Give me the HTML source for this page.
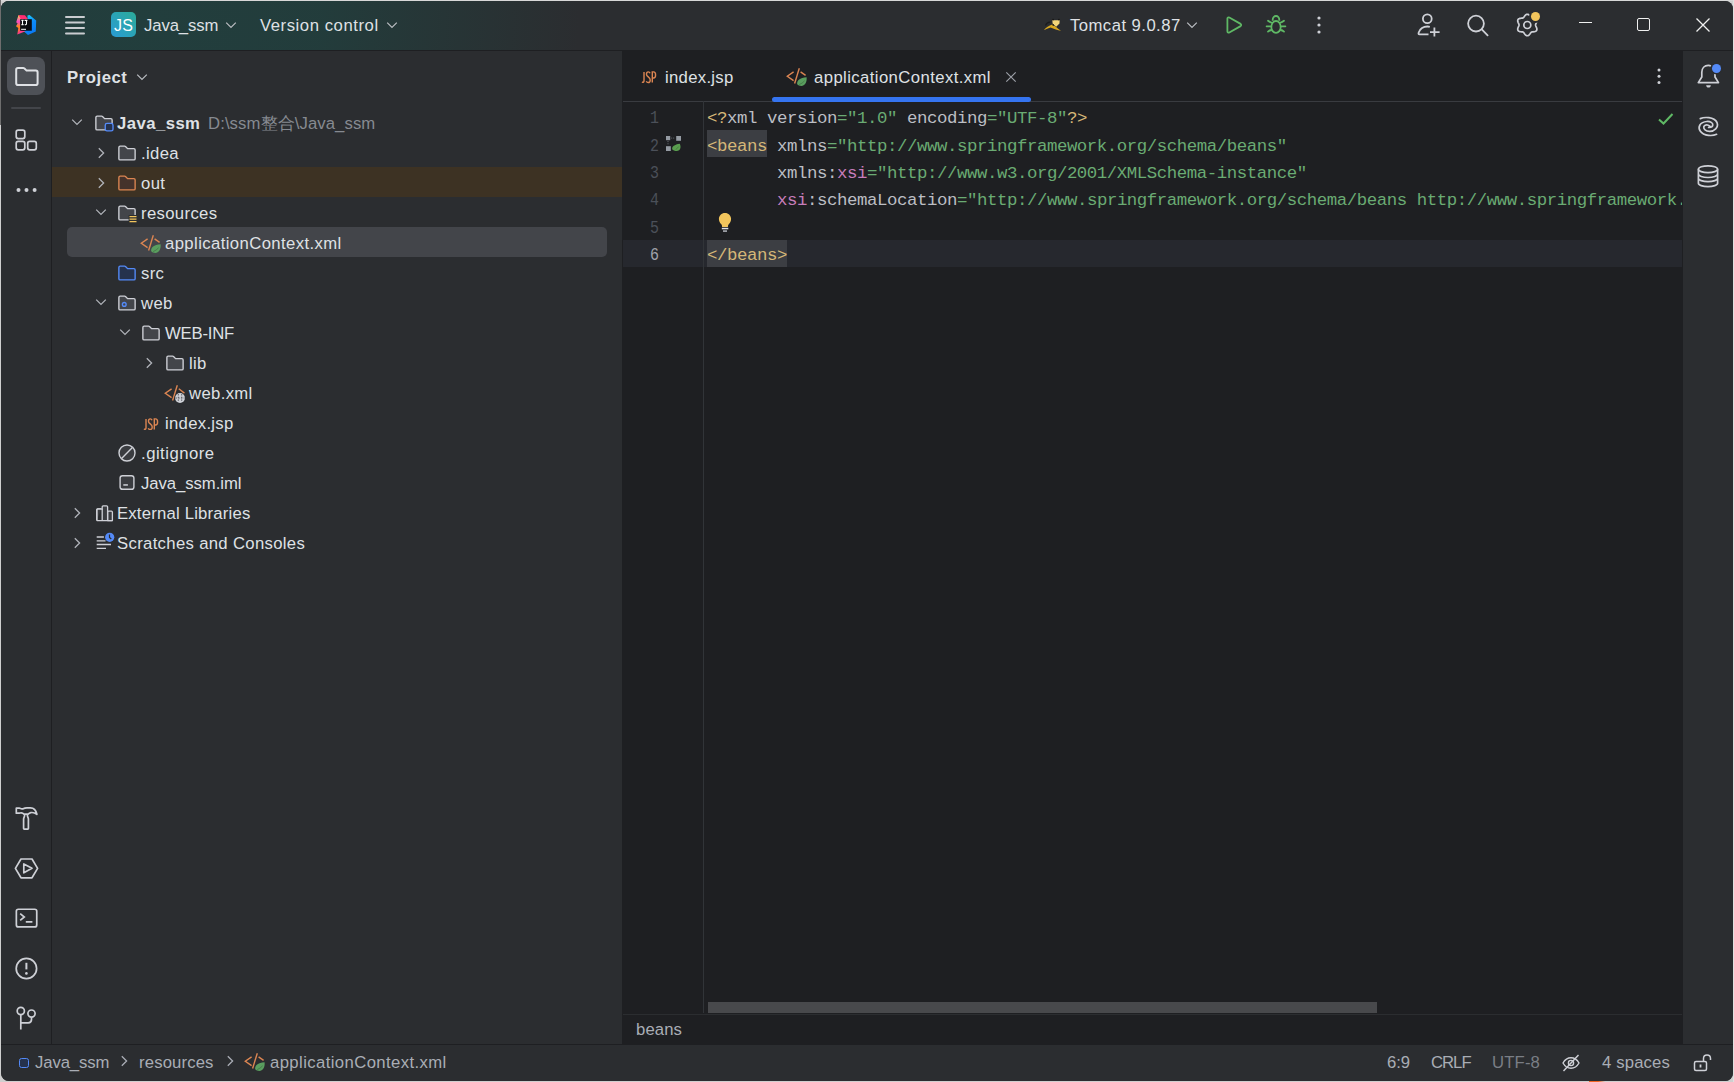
<!DOCTYPE html>
<html><head><meta charset="utf-8">
<style>
*{margin:0;padding:0;box-sizing:border-box}
html,body{width:1734px;height:1082px;overflow:hidden;background:#cfcfcf;font-family:"Liberation Sans",sans-serif;}
#win{position:absolute;left:1px;top:1px;width:1732px;height:1080px;border-radius:8px;overflow:hidden;background:#2B2D30}
.a{position:absolute;display:block}
.t{position:absolute;white-space:pre;line-height:20px}
.code{position:absolute;left:0;font-family:"Liberation Mono",monospace;font-size:17.4px;letter-spacing:-0.44px;white-space:pre;color:#BCBEC4;line-height:20px}
.tg{color:#D5B778}.av{color:#6AAB73}.ns{color:#C77DBB}
.ln{position:absolute;font-family:"Liberation Mono",monospace;font-size:17.8px;letter-spacing:-0.44px;color:#4B5059;line-height:20px;white-space:pre;transform:scaleX(0.84);transform-origin:0 0}
</style></head><body>
<div class="a" style="left:0;top:0;width:1734px;height:1px;background:#d8d8d8"></div>
<div class="a" style="left:0;top:0;width:1px;height:125px;background:#6e6e6e"></div>
<div class="a" style="left:1733px;top:0;width:1px;height:1082px;background:#e0e0e0"></div>
<div class="a" style="left:1589px;top:1076px;width:18px;height:6px;background:#F26522;border-radius:3px 6px 0 0;transform:skewY(-8deg)"></div>
<div id="win"><div class="a" style="left:-1px;top:-1px;width:1734px;height:1082px">

<div class="a" style="left:0;top:0;width:1734px;height:50px;background:#2B2D30"></div>
<div class="a" style="left:0;top:0;width:760px;height:50px;background:radial-gradient(ellipse 430px 300px at 150px 20px,rgba(34,62,61,1) 0%,rgba(34,61,60,0.95) 40%,rgba(43,45,48,0) 100%)"></div>
<div class="a" style="left:0;top:50px;width:1734px;height:1px;background:#1E1F22"></div>
<svg class="a" style="left:12px;top:11px;" width="28" height="28" viewBox="0 0 28 28" fill="none"><defs><linearGradient id="gb" x1="0" y1="0" x2="0.3" y2="1"><stop offset="0" stop-color="#22DCFF"/><stop offset="0.5" stop-color="#0D8BF8"/><stop offset="1" stop-color="#0A7CF5"/></linearGradient><linearGradient id="gl" x1="0" y1="0" x2="0" y2="1"><stop offset="0" stop-color="#FFD04A"/><stop offset="0.35" stop-color="#F548C8"/><stop offset="0.6" stop-color="#FF8A1C"/><stop offset="1" stop-color="#FF3D78"/></linearGradient></defs><path d="M15.5 4.5L17.5 4L24.2 9.5L23.8 20.5L16 24L12 20.5L15.5 8Z" fill="url(#gb)"/><path d="M6.5 4L13 4.2L16 8.2L8 8.8Z" fill="#FF2D72"/><path d="M6.5 4L8.8 8L8.4 20L5.3 23.5L6.3 17L4 15.3L5.6 12.5L4.2 11.2Z" fill="url(#gl)"/><path d="M5.3 23.5L8.4 19L13.5 20.2Z" fill="#FF3D8C"/><rect x="8.2" y="8.2" width="11.6" height="11.5" fill="#0A0A0F"/><path d="M9.4 9.4H11.6M10.5 9.4V13.6M9.4 13.6H11.6M12.6 9.4H15.4M14.5 9.4V12.6C14.5 13.6 13.8 14 12.8 13.6" stroke="#FFFFFF" stroke-width="1.1"/><rect x="9.1" y="17.8" width="4.9" height="1" fill="#FFFFFF"/></svg>
<svg class="a" style="left:64px;top:15px;" width="22" height="20" viewBox="0 0 22 20" fill="none"><rect x="1" y="1" width="20" height="2" rx="1" fill="#C9CCD0"/><rect x="1" y="6.5" width="20" height="2" rx="1" fill="#C9CCD0"/><rect x="1" y="12" width="20" height="2" rx="1" fill="#C9CCD0"/><rect x="1" y="17.5" width="20" height="2" rx="1" fill="#C9CCD0"/></svg>
<div class="a" style="left:111px;top:12px;width:25px;height:25px;border-radius:5px;background:linear-gradient(45deg,#2A9BD6 0%,#2BAB98 100%)"></div>
<div class="t" style="left:114px;top:16px;color:#FFFFFF;font-size:16px;letter-spacing:0.2px;font-weight:normal;">JS</div>
<div class="t" style="left:144px;top:16px;color:#DFE1E5;font-size:16.7px;letter-spacing:-0.1px;font-weight:normal;">Java_ssm</div>
<svg class="a" style="left:225px;top:19px;" width="12" height="12" viewBox="0 0 12 12" fill="none"><path d="M1.2 3.6L6 8.4L10.8 3.6" stroke="#B7BABF" stroke-width="1.3" fill="none"/></svg>
<div class="t" style="left:260px;top:16px;color:#DFE1E5;font-size:16.7px;letter-spacing:0.55px;font-weight:normal;">Version control</div>
<svg class="a" style="left:386px;top:19px;" width="12" height="12" viewBox="0 0 12 12" fill="none"><path d="M1.2 3.6L6 8.4L10.8 3.6" stroke="#B7BABF" stroke-width="1.3" fill="none"/></svg>
<svg class="a" style="left:1038px;top:12px;" width="28" height="26" viewBox="0 0 28 26" fill="none"><path d="M7.5 13.5C8.5 11.2 10.5 10 12.5 10.2" stroke="#1A1B1D" stroke-width="1.2"/><path d="M5.8 18.2C8 15.3 11 13.3 14.2 12.4C16.5 13.6 19.5 16 23 18.8C19.5 18.2 16 17 12.5 15.6C10.2 16.2 8 17.2 5.8 18.2Z" fill="#D9A820"/><path d="M14.3 7.6L15.4 8.3H20.6L21.7 7.6L21.5 11.5L18.2 14.8L14.6 11.5Z" fill="#F3D679"/><circle cx="15" cy="7.6" r="0.9" fill="#141414"/><circle cx="21" cy="7.6" r="0.9" fill="#141414"/><circle cx="15.2" cy="13.1" r="0.8" fill="#141414"/></svg>
<div class="t" style="left:1070px;top:16px;color:#DFE1E5;font-size:16.7px;letter-spacing:0.45px;font-weight:normal;">Tomcat 9.0.87</div>
<svg class="a" style="left:1186px;top:19px;" width="12" height="12" viewBox="0 0 12 12" fill="none"><path d="M1.2 3.6L6 8.4L10.8 3.6" stroke="#B7BABF" stroke-width="1.3" fill="none"/></svg>
<svg class="a" style="left:1218px;top:10px;" width="32" height="30" viewBox="0 0 32 30" fill="none"><path d="M9.4 8.6C9.4 7.6 10.4 7 11.3 7.5L22.6 13.9C23.4 14.4 23.4 15.6 22.6 16.1L11.3 22.5C10.4 23 9.4 22.4 9.4 21.4Z" stroke="#5FB865" stroke-width="1.8" stroke-linejoin="round" fill="none"/></svg>
<svg class="a" style="left:1260px;top:10px;" width="32" height="30" viewBox="0 0 32 30" fill="none"><path d="M12.7 10.8V9.8C12.7 7.6 14.2 6 16 6C17.8 6 19.3 7.6 19.3 9.8V10.8" stroke="#5FB865" stroke-width="1.8"/><ellipse cx="16" cy="16.9" rx="4.7" ry="5.9" stroke="#5FB865" stroke-width="1.8"/><path d="M8 10.8C9.2 11.8 10.2 12.4 11.4 12.6M6.6 16.3H11.3M8 21.6C9.2 20.6 10.2 20.2 11.4 20M24 10.8C22.8 11.8 21.8 12.4 20.6 12.6M25.4 16.3H20.7M24 21.6C22.8 20.6 21.8 20.2 20.6 20" stroke="#5FB865" stroke-width="1.8" stroke-linecap="round"/></svg>
<svg class="a" style="left:1315px;top:14px;" width="8" height="22" viewBox="0 0 8 22" fill="none"><circle cx="4" cy="4" r="1.6" fill="#CED0D6"/><circle cx="4" cy="11" r="1.6" fill="#CED0D6"/><circle cx="4" cy="18" r="1.6" fill="#CED0D6"/></svg>
<svg class="a" style="left:1416px;top:10px;" width="26" height="28" viewBox="0 0 26 28" fill="none"><circle cx="11.3" cy="8.8" r="4.4" stroke="#CED0D6" stroke-width="1.8"/><path d="M12.5 24.3H3.5C2.5 24.3 2.3 23.6 2.7 22.5C4 19 7.2 16.5 11.5 16.5C12.3 16.5 13 16.6 13.8 16.8" stroke="#CED0D6" stroke-width="1.8"/><path d="M18.4 17.5V26.6M14 22.1H23.6" stroke="#CED0D6" stroke-width="1.8"/></svg>
<svg class="a" style="left:1465px;top:12px;" width="26" height="26" viewBox="0 0 26 26" fill="none"><circle cx="11" cy="11.6" r="7.9" stroke="#CED0D6" stroke-width="1.8"/><path d="M16.8 17.4L22.6 23.3" stroke="#CED0D6" stroke-width="1.8" stroke-linecap="round"/></svg>
<svg class="a" style="left:1512px;top:8px;" width="32" height="32" viewBox="0 0 32 32" fill="none"><path d="M23.55 17.00 L23.63 17.55 L23.84 18.12 L24.15 18.76 L24.48 19.46 L24.75 20.21 L24.89 20.97 L24.86 21.71 L24.61 22.38 L24.16 22.92 L23.54 23.32 L22.80 23.58 L22.02 23.72 L21.25 23.78 L20.55 23.84 L19.94 23.94 L19.43 24.14 L18.99 24.48 L18.60 24.96 L18.20 25.54 L17.76 26.18 L17.25 26.79 L16.66 27.30 L16.00 27.63 L15.30 27.75 L14.60 27.63 L13.94 27.30 L13.35 26.79 L12.84 26.18 L12.40 25.54 L12.00 24.96 L11.61 24.48 L11.18 24.14 L10.66 23.94 L10.05 23.84 L9.35 23.78 L8.58 23.72 L7.80 23.58 L7.06 23.32 L6.44 22.92 L5.99 22.38 L5.74 21.71 L5.71 20.97 L5.85 20.21 L6.12 19.46 L6.45 18.76 L6.76 18.12 L6.97 17.55 L7.05 17.00 L6.97 16.45 L6.76 15.88 L6.45 15.24 L6.12 14.54 L5.85 13.79 L5.71 13.03 L5.74 12.29 L5.99 11.63 L6.44 11.08 L7.06 10.68 L7.80 10.42 L8.58 10.28 L9.35 10.22 L10.05 10.16 L10.66 10.06 L11.17 9.86 L11.61 9.52 L12.00 9.04 L12.40 8.46 L12.84 7.82 L13.35 7.21 L13.94 6.70 L14.60 6.37 L15.30 6.25 L16.00 6.37 L16.66 6.70 L17.25 7.21 L17.76 7.82 L18.20 8.46 L18.60 9.04 L18.99 9.52 L19.43 9.86 L19.94 10.06 L20.55 10.16 L21.25 10.22 L22.02 10.28 L22.80 10.42 L23.54 10.68 L24.16 11.08 L24.61 11.62 L24.86 12.29 L24.89 13.03 L24.75 13.79 L24.48 14.54 L24.15 15.24 L23.84 15.88 L23.63 16.45Z" stroke="#CED0D6" stroke-width="1.7" stroke-linejoin="round"/><circle cx="15.3" cy="17" r="3.5" stroke="#CED0D6" stroke-width="1.7"/></svg>
<div class="a" style="left:1530.7px;top:12.1px;width:9.2px;height:9.2px;border-radius:50%;background:#F2C55C;box-shadow:0 0 0 2px #2B2D30"></div>
<div class="a" style="left:1579px;top:22px;width:13px;height:1.4px;background:#F0F0F0"></div>
<div class="a" style="left:1637px;top:18px;width:13px;height:13px;border:1.4px solid #F0F0F0;border-radius:2px"></div>
<svg class="a" style="left:1695px;top:17px;" width="16" height="16" viewBox="0 0 16 16" fill="none"><path d="M1.5 1.5L14.5 14.5M14.5 1.5L1.5 14.5" stroke="#F0F0F0" stroke-width="1.3"/></svg>
<div class="a" style="left:0;top:51px;width:51px;height:993px;background:#2B2D30"></div>
<div class="a" style="left:51px;top:51px;width:1px;height:993px;background:#1E1F22"></div>
<div class="a" style="left:7px;top:57px;width:38px;height:38px;border-radius:8px;background:#4E5157"></div>
<svg class="a" style="left:14px;top:65px;" width="26" height="24" viewBox="0 0 26 24" fill="none"><path d="M2.2 4.8C2.2 3.8 3 3 4 3H9.2C9.7 3 10.1 3.2 10.5 3.5L12.6 5.6H21.8C22.8 5.6 23.6 6.4 23.6 7.4V18.2C23.6 19.2 22.8 20 21.8 20H4C3 20 2.2 19.2 2.2 18.2V4.8Z" stroke="#DFE1E5" stroke-width="2"/></svg>
<div class="a" style="left:11px;top:107px;width:30px;height:2px;background:#43454A;border-radius:1px"></div>
<svg class="a" style="left:13px;top:127px;" width="26" height="26" viewBox="0 0 26 26" fill="none"><rect x="3.2" y="3.2" width="8.6" height="8.4" rx="2" stroke="#CED0D6" stroke-width="1.7"/><rect x="3.2" y="14.4" width="8.6" height="8.4" rx="2" stroke="#CED0D6" stroke-width="1.7"/><rect x="14.7" y="14.4" width="8.6" height="8.4" rx="2" stroke="#CED0D6" stroke-width="1.7"/></svg>
<svg class="a" style="left:13px;top:183px;" width="26" height="14" viewBox="0 0 26 14" fill="none"><circle cx="5.5" cy="7" r="2" fill="#CED0D6"/><circle cx="13.5" cy="7" r="2" fill="#CED0D6"/><circle cx="21.6" cy="7" r="2" fill="#CED0D6"/></svg>
<svg class="a" style="left:10px;top:802px;" width="32" height="32" viewBox="0 0 32 32" fill="none"><path d="M6.3 6.2H9.3C10.2 6.2 10.8 6.8 11.8 6.8H13.2C14.2 6.2 15.5 5.9 17 5.9H20.5C23.5 5.9 26 8.4 26.9 12.3C25 10.9 22.5 10.3 20.8 10.6C19.8 10.8 18.9 11.3 18.3 12.1H13.8C13.2 11.3 12.3 10.8 11.3 10.8C10.3 10.8 9.8 11.2 8.8 11.2H6.3Z" stroke="#CED0D6" stroke-width="1.7" stroke-linejoin="round"/><path d="M14.6 12.1V13.6C14.6 14.5 13.6 15.8 13.6 17V26.6C13.6 27 13.9 27.2 14.2 27.2H17.8C18.1 27.2 18.4 27 18.4 26.6V17C18.4 15.8 17.4 14.5 17.4 13.6V12.1" stroke="#CED0D6" stroke-width="1.7" stroke-linejoin="round"/></svg>
<svg class="a" style="left:13px;top:856px;" width="27" height="25" viewBox="0 0 27 25" fill="none"><path d="M8 3H19L24.6 12.4L19 21.8H8L2.4 12.4Z" stroke="#CED0D6" stroke-width="1.7" stroke-linejoin="round"/><path d="M10.8 7.9V16.8L19 12.35Z" stroke="#CED0D6" stroke-width="1.7" stroke-linejoin="round"/></svg>
<svg class="a" style="left:13px;top:906px;" width="27" height="24" viewBox="0 0 27 24" fill="none"><rect x="3.35" y="3.25" width="20.4" height="17.7" rx="2" stroke="#CED0D6" stroke-width="1.7"/><path d="M7.2 7.6L11.3 11L7.2 14.4M12.8 15.8H19.4" stroke="#CED0D6" stroke-width="1.7"/></svg>
<svg class="a" style="left:13px;top:955px;" width="27" height="27" viewBox="0 0 27 27" fill="none"><circle cx="13.4" cy="13.5" r="10.2" stroke="#CED0D6" stroke-width="1.7"/><path d="M13.4 7.8V14.4" stroke="#CED0D6" stroke-width="2"/><circle cx="13.4" cy="18.4" r="1.3" fill="#CED0D6"/></svg>
<svg class="a" style="left:13px;top:1003px;" width="27" height="29" viewBox="0 0 27 29" fill="none"><circle cx="7.8" cy="8" r="3.6" stroke="#CED0D6" stroke-width="1.7"/><circle cx="18.5" cy="10.6" r="3.6" stroke="#CED0D6" stroke-width="1.7"/><path d="M7.8 11.6V26.5M18.5 14.2V16.5C18.5 18.5 17.2 19.8 15.2 19.8H7.8" stroke="#CED0D6" stroke-width="1.7"/></svg>
<div class="a" style="left:52px;top:51px;width:570px;height:993px;background:#2B2D30"></div>
<div class="a" style="left:622px;top:51px;width:1px;height:993px;background:#1E1F22"></div>
<div class="t" style="left:67px;top:68px;color:#DFE1E5;font-size:16.7px;letter-spacing:0.55px;font-weight:bold;">Project</div>
<svg class="a" style="left:136px;top:71px;" width="12" height="12" viewBox="0 0 12 12" fill="none"><path d="M1.2 3.6L6 8.4L10.8 3.6" stroke="#B7BABF" stroke-width="1.3" fill="none"/></svg>
<svg class="a" style="left:71px;top:116px;" width="12" height="12" viewBox="0 0 12 12" fill="none"><path d="M1.2 3.6L6 8.4L10.8 3.6" stroke="#B0B3B9" stroke-width="1.3" fill="none"/></svg>
<svg class="a" style="left:93.7px;top:113px;" width="20" height="20" viewBox="0 0 16 16" fill="none"><path d="M1.5 3.5C1.5 2.95 1.95 2.5 2.5 2.5H6.09C6.35 2.5 6.61 2.61 6.79 2.79L8.5 4.5H13.5C14.05 4.5 14.5 4.95 14.5 5.5V12.5C14.5 13.05 14.05 13.5 13.5 13.5H2.5C1.95 13.5 1.5 13.05 1.5 12.5V3.5Z" fill="#43454A" stroke="#CED0D6" stroke-width="1.1"/><rect x="9" y="8.3" width="6.2" height="6" rx="1.4" fill="#25324D" stroke="#548AF7" stroke-width="1.1"/></svg>
<div class="t" style="left:117px;top:114px;color:#DFE1E5;font-size:16.7px;letter-spacing:0.45px;font-weight:bold;">Java_ssm</div>
<div class="t" style="left:208px;top:114px;color:#868A91;font-size:16.7px;letter-spacing:0.1px;font-weight:normal;">D:\ssm整合\Java_ssm</div>
<svg class="a" style="left:94.5px;top:147px;" width="12" height="12" viewBox="0 0 12 12" fill="none"><path d="M3.8 1.2L8.6 6L3.8 10.8" stroke="#B0B3B9" stroke-width="1.3" fill="none"/></svg>
<svg class="a" style="left:116.9px;top:143px;" width="20" height="20" viewBox="0 0 16 16" fill="none"><path d="M1.5 3.5C1.5 2.95 1.95 2.5 2.5 2.5H6.09C6.35 2.5 6.61 2.61 6.79 2.79L8.5 4.5H13.5C14.05 4.5 14.5 4.95 14.5 5.5V12.5C14.5 13.05 14.05 13.5 13.5 13.5H2.5C1.95 13.5 1.5 13.05 1.5 12.5V3.5Z" fill="#43454A" stroke="#CED0D6" stroke-width="1.1"/></svg>
<div class="t" style="left:141px;top:144px;color:#DFE1E5;font-size:16.7px;letter-spacing:0.35px;font-weight:normal;">.idea</div>
<div class="a" style="left:52px;top:167px;width:570px;height:30px;background:#3D3223"></div>
<svg class="a" style="left:94.5px;top:177px;" width="12" height="12" viewBox="0 0 12 12" fill="none"><path d="M3.8 1.2L8.6 6L3.8 10.8" stroke="#B0B3B9" stroke-width="1.3" fill="none"/></svg>
<svg class="a" style="left:116.9px;top:173px;" width="20" height="20" viewBox="0 0 16 16" fill="none"><path d="M1.5 3.5C1.5 2.95 1.95 2.5 2.5 2.5H6.09C6.35 2.5 6.61 2.61 6.79 2.79L8.5 4.5H13.5C14.05 4.5 14.5 4.95 14.5 5.5V12.5C14.5 13.05 14.05 13.5 13.5 13.5H2.5C1.95 13.5 1.5 13.05 1.5 12.5V3.5Z" fill="#45322B" stroke="#DB8552" stroke-width="1.1"/></svg>
<div class="t" style="left:141px;top:174px;color:#DFE1E5;font-size:16.7px;letter-spacing:0.35px;font-weight:normal;">out</div>
<svg class="a" style="left:95px;top:206px;" width="12" height="12" viewBox="0 0 12 12" fill="none"><path d="M1.2 3.6L6 8.4L10.8 3.6" stroke="#B0B3B9" stroke-width="1.3" fill="none"/></svg>
<svg class="a" style="left:116.9px;top:203px;" width="20" height="20" viewBox="0 0 16 16" fill="none"><path d="M1.5 3.5C1.5 2.95 1.95 2.5 2.5 2.5H6.09C6.35 2.5 6.61 2.61 6.79 2.79L8.5 4.5H13.5C14.05 4.5 14.5 4.95 14.5 5.5V12.5C14.5 13.05 14.05 13.5 13.5 13.5H2.5C1.95 13.5 1.5 13.05 1.5 12.5V3.5Z" fill="#43454A" stroke="#CED0D6" stroke-width="1.1"/><rect x="9.3" y="9.6" width="6.7" height="6.4" fill="#2B2D30"/><path d="M10 10.9H15.6M10 12.9H15.6M10 14.9H15.6" stroke="#F2C55C" stroke-width="1.1"/></svg>
<div class="t" style="left:141px;top:204px;color:#DFE1E5;font-size:16.7px;letter-spacing:0.35px;font-weight:normal;">resources</div>
<div class="a" style="left:67px;top:227px;width:540px;height:30px;background:#43454A;border-radius:5px"></div>
<svg class="a" style="left:140px;top:234px;" width="22" height="20" viewBox="0 0 22 20" fill="none"><path d="M7.6 4.9L1.3 9.3L7.6 13.6" stroke="#DB8552" stroke-width="1.4" fill="none"/><path d="M13.3 1.2L8.6 16.5" stroke="#DB8552" stroke-width="1.4"/><path d="M14.6 4.9L19.6 8.4" stroke="#DB8552" stroke-width="1.4"/><path d="M11.2 17.3C10.6 13.6 13.8 10.9 20.6 10.3C21.2 15.6 18.6 19 15.2 18.9C13.6 18.9 12.2 18.3 11.2 17.3Z" fill="#5A9E5F"/><path d="M13.2 17.6C15.3 16.8 17.2 15.4 18.6 13.8" stroke="#3D6E42" stroke-width="0.7"/></svg>
<div class="t" style="left:165px;top:234px;color:#DFE1E5;font-size:16.7px;letter-spacing:0.4px;font-weight:normal;">applicationContext.xml</div>
<svg class="a" style="left:116.9px;top:263px;" width="20" height="20" viewBox="0 0 16 16" fill="none"><path d="M1.5 3.5C1.5 2.95 1.95 2.5 2.5 2.5H6.09C6.35 2.5 6.61 2.61 6.79 2.79L8.5 4.5H13.5C14.05 4.5 14.5 4.95 14.5 5.5V12.5C14.5 13.05 14.05 13.5 13.5 13.5H2.5C1.95 13.5 1.5 13.05 1.5 12.5V3.5Z" fill="#25324D" stroke="#548AF7" stroke-width="1.1"/></svg>
<div class="t" style="left:141px;top:264px;color:#DFE1E5;font-size:16.7px;letter-spacing:0.35px;font-weight:normal;">src</div>
<svg class="a" style="left:95px;top:296px;" width="12" height="12" viewBox="0 0 12 12" fill="none"><path d="M1.2 3.6L6 8.4L10.8 3.6" stroke="#B0B3B9" stroke-width="1.3" fill="none"/></svg>
<svg class="a" style="left:116.9px;top:293px;" width="20" height="20" viewBox="0 0 16 16" fill="none"><path d="M1.5 3.5C1.5 2.95 1.95 2.5 2.5 2.5H6.09C6.35 2.5 6.61 2.61 6.79 2.79L8.5 4.5H13.5C14.05 4.5 14.5 4.95 14.5 5.5V12.5C14.5 13.05 14.05 13.5 13.5 13.5H2.5C1.95 13.5 1.5 13.05 1.5 12.5V3.5Z" fill="#43454A" stroke="#CED0D6" stroke-width="1.1"/><circle cx="5.8" cy="9.1" r="1.5" stroke="#548AF7" stroke-width="1.1"/></svg>
<div class="t" style="left:141px;top:294px;color:#DFE1E5;font-size:16.7px;letter-spacing:0.35px;font-weight:normal;">web</div>
<svg class="a" style="left:119px;top:326px;" width="12" height="12" viewBox="0 0 12 12" fill="none"><path d="M1.2 3.6L6 8.4L10.8 3.6" stroke="#B0B3B9" stroke-width="1.3" fill="none"/></svg>
<svg class="a" style="left:141px;top:323px;" width="20" height="20" viewBox="0 0 16 16" fill="none"><path d="M1.5 3.5C1.5 2.95 1.95 2.5 2.5 2.5H6.09C6.35 2.5 6.61 2.61 6.79 2.79L8.5 4.5H13.5C14.05 4.5 14.5 4.95 14.5 5.5V12.5C14.5 13.05 14.05 13.5 13.5 13.5H2.5C1.95 13.5 1.5 13.05 1.5 12.5V3.5Z" fill="#43454A" stroke="#CED0D6" stroke-width="1.1"/></svg>
<div class="t" style="left:165px;top:324px;color:#DFE1E5;font-size:16.7px;letter-spacing:-0.2px;font-weight:normal;">WEB-INF</div>
<svg class="a" style="left:142.5px;top:357px;" width="12" height="12" viewBox="0 0 12 12" fill="none"><path d="M3.8 1.2L8.6 6L3.8 10.8" stroke="#B0B3B9" stroke-width="1.3" fill="none"/></svg>
<svg class="a" style="left:164.9px;top:353px;" width="20" height="20" viewBox="0 0 16 16" fill="none"><path d="M1.5 3.5C1.5 2.95 1.95 2.5 2.5 2.5H6.09C6.35 2.5 6.61 2.61 6.79 2.79L8.5 4.5H13.5C14.05 4.5 14.5 4.95 14.5 5.5V12.5C14.5 13.05 14.05 13.5 13.5 13.5H2.5C1.95 13.5 1.5 13.05 1.5 12.5V3.5Z" fill="#43454A" stroke="#CED0D6" stroke-width="1.1"/></svg>
<div class="t" style="left:189px;top:354px;color:#DFE1E5;font-size:16.7px;letter-spacing:0.35px;font-weight:normal;">lib</div>
<svg class="a" style="left:163.9px;top:384px;" width="22" height="20" viewBox="0 0 22 20" fill="none"><path d="M7.6 4.9L1.3 9.3L7.6 13.6" stroke="#DB8552" stroke-width="1.4" fill="none"/><path d="M13.3 1.2L8.6 16.5" stroke="#DB8552" stroke-width="1.4"/><path d="M14.8 4.8L20.4 9.1" stroke="#DB8552" stroke-width="1.4"/><circle cx="16" cy="14" r="5.6" fill="#2B2D30"/><circle cx="16" cy="14" r="4.9" fill="#CED0D6"/><path d="M14.3 10V18M17.7 10V18M11.5 14H20.5" stroke="#55575C" stroke-width="0.9" stroke-dasharray="1.5 1.2"/></svg>
<div class="t" style="left:189px;top:384px;color:#DFE1E5;font-size:16.7px;letter-spacing:0.35px;font-weight:normal;">web.xml</div>
<svg class="a" style="left:142.5px;top:417.5px;" width="16" height="12.5" viewBox="0 -0.5 17 13" fill="none"><path d="M3.2 0.3V9.6C3.2 11.1 2.4 11.6 0.9 11.2M9.6 1.7C9.3 0.8 8.7 0.3 7.7 0.3C6.5 0.3 5.8 1.2 5.8 2.7C5.8 5.7 9.8 5.4 9.8 8.8C9.8 10.5 9 11.6 7.6 11.6C6.6 11.6 6 11 5.6 10.2M12 11.7V0.3H13.3C14.7 0.3 15.5 1.4 15.5 3.5C15.5 5.6 14.7 6.8 13.3 6.8H12" stroke="#DB8552" stroke-width="1.5"/></svg>
<div class="t" style="left:165px;top:414px;color:#DFE1E5;font-size:16.7px;letter-spacing:0.3px;font-weight:normal;">index.jsp</div>
<svg class="a" style="left:117px;top:443px;" width="20" height="20" viewBox="0 0 20 20" fill="none"><circle cx="10" cy="10" r="8" fill="#3A3C40" stroke="#CED0D6" stroke-width="1.4"/><path d="M4.6 15.4L15.4 4.6" stroke="#CED0D6" stroke-width="1.4"/></svg>
<div class="t" style="left:141px;top:444px;color:#DFE1E5;font-size:16.7px;letter-spacing:0.5px;font-weight:normal;">.gitignore</div>
<svg class="a" style="left:117px;top:473px;" width="20" height="20" viewBox="0 0 20 20" fill="none"><rect x="3.1" y="2.7" width="13.8" height="13.6" rx="2.4" fill="#3A3C40" stroke="#CED0D6" stroke-width="1.4"/><rect x="6.3" y="11.2" width="4.6" height="1.5" fill="#CED0D6"/></svg>
<div class="t" style="left:141px;top:474px;color:#DFE1E5;font-size:16.7px;letter-spacing:-0.05px;font-weight:normal;">Java_ssm.iml</div>
<svg class="a" style="left:70.5px;top:507px;" width="12" height="12" viewBox="0 0 12 12" fill="none"><path d="M3.8 1.2L8.6 6L3.8 10.8" stroke="#B0B3B9" stroke-width="1.3" fill="none"/></svg>
<svg class="a" style="left:95px;top:503.5px;" width="20" height="20" viewBox="0 0 20 20" fill="none"><path d="M1.8 16.6V5.8C1.8 5.2 2.2 4.8 2.8 4.8H6.4M12.6 16.6V8.2C12.6 7.6 13 7.2 13.6 7.2H16.4C17 7.2 17.4 7.6 17.4 8.2V16.6Z" fill="#3A3C40" stroke="#CED0D6" stroke-width="1.3" stroke-linejoin="round"/><path d="M1.8 16.6H17.4M7.2 16.6V2.8C7.2 2.2 7.6 1.8 8.2 1.8H11.6C12.2 1.8 12.6 2.2 12.6 2.8V16.6" fill="#3A3C40" stroke="#CED0D6" stroke-width="1.3" stroke-linejoin="round"/><path d="M1.8 16.6V5.8C1.8 5.2 2.2 4.8 2.8 4.8H6.2C6.8 4.8 7.2 5.2 7.2 5.8" stroke="#CED0D6" stroke-width="1.3"/></svg>
<div class="t" style="left:117px;top:504px;color:#DFE1E5;font-size:16.7px;letter-spacing:0.2px;font-weight:normal;">External Libraries</div>
<svg class="a" style="left:70.5px;top:537px;" width="12" height="12" viewBox="0 0 12 12" fill="none"><path d="M3.8 1.2L8.6 6L3.8 10.8" stroke="#B0B3B9" stroke-width="1.3" fill="none"/></svg>
<svg class="a" style="left:95px;top:531px;" width="22" height="22" viewBox="0 0 22 22" fill="none"><path d="M1.7 6H8.9M1.7 9.9H10.5M1.7 13.5H16M1.7 17.4H11" stroke="#CED0D6" stroke-width="1.3"/><circle cx="14.7" cy="6.3" r="4.6" fill="#548AF7"/><path d="M14.5 3.6V6.5L16.3 8" stroke="#2B2D30" stroke-width="1.2"/></svg>
<div class="t" style="left:117px;top:534px;color:#DFE1E5;font-size:16.7px;letter-spacing:0.33px;font-weight:normal;">Scratches and Consoles</div>
<div class="a" style="left:623px;top:51px;width:1060px;height:993px;background:#1E1F22"></div>
<svg class="a" style="left:641px;top:71px;" width="16" height="12.5" viewBox="0 -0.5 17 13" fill="none"><path d="M3.2 0.3V9.6C3.2 11.1 2.4 11.6 0.9 11.2M9.6 1.7C9.3 0.8 8.7 0.3 7.7 0.3C6.5 0.3 5.8 1.2 5.8 2.7C5.8 5.7 9.8 5.4 9.8 8.8C9.8 10.5 9 11.6 7.6 11.6C6.6 11.6 6 11 5.6 10.2M12 11.7V0.3H13.3C14.7 0.3 15.5 1.4 15.5 3.5C15.5 5.6 14.7 6.8 13.3 6.8H12" stroke="#DB8552" stroke-width="1.5"/></svg>
<div class="t" style="left:665px;top:68px;color:#DFE1E5;font-size:16.7px;letter-spacing:0.3px;font-weight:normal;">index.jsp</div>
<svg class="a" style="left:786px;top:67px;" width="22" height="20" viewBox="0 0 22 20" fill="none"><path d="M7.6 4.9L1.3 9.3L7.6 13.6" stroke="#DB8552" stroke-width="1.4" fill="none"/><path d="M13.3 1.2L8.6 16.5" stroke="#DB8552" stroke-width="1.4"/><path d="M14.6 4.9L19.6 8.4" stroke="#DB8552" stroke-width="1.4"/><path d="M11.2 17.3C10.6 13.6 13.8 10.9 20.6 10.3C21.2 15.6 18.6 19 15.2 18.9C13.6 18.9 12.2 18.3 11.2 17.3Z" fill="#5A9E5F"/><path d="M13.2 17.6C15.3 16.8 17.2 15.4 18.6 13.8" stroke="#3D6E42" stroke-width="0.7"/></svg>
<div class="t" style="left:814px;top:68px;color:#DFE1E5;font-size:16.7px;letter-spacing:0.41px;font-weight:normal;">applicationContext.xml</div>
<svg class="a" style="left:1004px;top:70px;" width="14" height="14" viewBox="0 0 14 14" fill="none"><path d="M2.3 2.3L11.7 11.7M11.7 2.3L2.3 11.7" stroke="#9DA0A8" stroke-width="1.15"/></svg>
<svg class="a" style="left:1655px;top:67px;" width="8" height="20" viewBox="0 0 8 20" fill="none"><circle cx="4" cy="3" r="1.5" fill="#CED0D6"/><circle cx="4" cy="9.3" r="1.5" fill="#CED0D6"/><circle cx="4" cy="15.6" r="1.5" fill="#CED0D6"/></svg>
<div class="a" style="left:623px;top:101px;width:1060px;height:1px;background:#393B40"></div>
<div class="a" style="left:772px;top:97px;width:259px;height:5px;background:#3574F0;border-radius:2.5px"></div>
<div class="a" style="left:623px;top:240px;width:1060px;height:27px;background:#26282E"></div>
<div class="a" style="left:703px;top:101px;width:1px;height:912px;background:#313438"></div>
<div class="a" style="left:707px;top:130px;width:60px;height:27px;background:#3C3E43"></div>
<div class="a" style="left:707px;top:240px;width:80px;height:27px;background:#3C3E43"></div>
<div class="ln" style="left:650px;top:108.30px;color:#4B5059">1</div>
<div class="ln" style="left:650px;top:135.65px;color:#4B5059">2</div>
<div class="ln" style="left:650px;top:163.00px;color:#4B5059">3</div>
<div class="ln" style="left:650px;top:190.35px;color:#4B5059">4</div>
<div class="ln" style="left:650px;top:217.70px;color:#4B5059">5</div>
<div class="ln" style="left:650px;top:245.05px;color:#A1A3AB">6</div>
<svg class="a" style="left:662px;top:132px;" width="24" height="24" viewBox="0 0 24 24" fill="none"><rect x="4" y="4" width="4.2" height="4.2" fill="#959BA3"/><rect x="14.2" y="4" width="4.8" height="4.8" fill="#959BA3"/><rect x="4" y="14.2" width="4.8" height="4.8" fill="#959BA3"/><circle cx="9.7" cy="6" r="0.55" fill="#6F757C"/><circle cx="11.7" cy="6" r="0.55" fill="#6F757C"/><circle cx="6" cy="9.6" r="0.55" fill="#6F757C"/><circle cx="6" cy="11.8" r="0.55" fill="#6F757C"/><path d="M10.2 17.3C9.8 14.6 12.5 12.6 17.8 11.8C19.3 15 18.6 19.2 14.6 19.1C12.8 19.1 11 18.4 10.2 17.3Z" fill="#5A9E4F"/><path d="M13.6 17.6C15 16.7 16 15.7 16.6 14.6" stroke="#3A6B35" stroke-width="0.6"/></svg>
<svg class="a" style="left:717px;top:212px;" width="16" height="22" viewBox="0 0 16 22" fill="none"><path d="M8 1C4.5 1 1.9 3.7 1.9 7C1.9 9.3 3 10.9 4.3 12.2C4.9 12.8 5.1 13.8 5.1 14.9H10.9C10.9 13.8 11.1 12.8 11.7 12.2C13 10.9 14.1 9.3 14.1 7C14.1 3.7 11.5 1 8 1Z" fill="#F2C55C"/><rect x="4.8" y="15.8" width="6.5" height="1.5" fill="#DFE1E5"/><rect x="6" y="18.2" width="4" height="1.8" fill="#9A9CA3"/></svg>
<div class="a" style="left:707px;top:101px;width:976px;height:900px;overflow:hidden">
<div class="code" style="top:8.40px"><span class="tg">&lt;?</span>xml version<span class="av">="1.0"</span> encoding<span class="av">="UTF-8"</span><span class="tg">?&gt;</span></div>
<div class="code" style="top:35.75px"><span class="tg">&lt;beans</span> xmlns<span class="av">="http://www.springframework.org/schema/beans"</span></div>
<div class="code" style="top:63.10px">       xmlns:<span class="ns">xsi</span><span class="av">="http://www.w3.org/2001/XMLSchema-instance"</span></div>
<div class="code" style="top:90.45px">       <span class="ns">xsi</span>:schemaLocation<span class="av">="http://www.springframework.org/schema/beans http://www.springframework.org/schema/beans/spring-beans.xsd"</span></div>
<div class="code" style="top:117.80px"></div>
<div class="code" style="top:145.15px"><span class="tg">&lt;/beans&gt;</span></div>
</div>
<svg class="a" style="left:1657px;top:111px;" width="18" height="16" viewBox="0 0 18 16" fill="none"><path d="M2 8.5L6.5 12.5L15.5 3" stroke="#5FB865" stroke-width="2"/></svg>
<div class="a" style="left:708px;top:1002px;width:669px;height:10.5px;background:#48494C"></div>
<div class="a" style="left:623px;top:1014px;width:1060px;height:1px;background:#2B2D30"></div>
<div class="t" style="left:636px;top:1020px;color:#A9ADB5;font-size:16.7px;letter-spacing:0.1px;font-weight:normal;">beans</div>
<div class="a" style="left:1682px;top:51px;width:1px;height:993px;background:#1E1F22"></div>
<div class="a" style="left:1683px;top:51px;width:51px;height:993px;background:#2B2D30"></div>
<svg class="a" style="left:1692px;top:58px;" width="32" height="36" viewBox="0 0 32 36" fill="none"><path d="M19 8.2C18.3 7.6 17.3 7.3 16.3 7.3C12.5 7.3 9.8 10.2 9.8 14.2V19L6.3 24.6H26.5L23 19V15.3" stroke="#CED0D6" stroke-width="1.7" stroke-linejoin="round"/><path d="M14.2 27.2H18.8C18.8 28.6 17.8 29.6 16.5 29.6C15.2 29.6 14.2 28.6 14.2 27.2Z" fill="#CED0D6"/></svg>
<div class="a" style="left:1712.1px;top:63.5px;width:9px;height:9px;border-radius:50%;background:#548AF7;box-shadow:0 0 0 1.5px #2B2D30"></div>
<svg class="a" style="left:1692px;top:110px;" width="32" height="32" viewBox="0 0 32 32" fill="none"><path d="M8.3 8.6C12 7 22 6.5 25 12.5C27 17.5 22 21.5 17.5 21.3C13.5 21 11.5 19 11.8 17C12 15.3 14 14.5 15.5 15C17 15.5 18 16.5 18.3 16.6" stroke="#CED0D6" stroke-width="1.7" stroke-linecap="round"/><path d="M24.6 24.3C21 26 12 26.5 8.2 21C5.5 17 8 12 14.8 11.5C18.5 11.2 21 13 20.8 15C20.6 16.8 18.5 17.6 16.6 17.5" stroke="#CED0D6" stroke-width="1.7" stroke-linecap="round"/></svg>
<svg class="a" style="left:1692px;top:160px;" width="32" height="32" viewBox="0 0 32 32" fill="none"><ellipse cx="16" cy="9.2" rx="9.6" ry="3.4" stroke="#CED0D6" stroke-width="1.7"/><path d="M6.4 9.2V23.2A9.6 3.4 0 0 0 25.6 23.2V9.2M6.4 14.1A9.6 3.4 0 0 0 25.6 14.1M6.4 18.2A9.6 3.4 0 0 0 25.6 18.2" stroke="#CED0D6" stroke-width="1.7"/></svg>
<div class="a" style="left:0;top:1044px;width:1734px;height:1px;background:#1E1F22"></div>
<div class="a" style="left:0;top:1045px;width:1734px;height:37px;background:#2B2D30"></div>
<div class="a" style="left:19px;top:1058px;width:10px;height:10px;border:1.5px solid #548AF7;border-radius:2.5px;background:#25324D"></div>
<div class="t" style="left:35px;top:1053px;color:#A9ADB5;font-size:16.7px;letter-spacing:-0.1px;font-weight:normal;">Java_ssm</div>
<svg class="a" style="left:118px;top:1055px;" width="12" height="12" viewBox="0 0 12 12" fill="none"><path d="M3.8 1.2L8.6 6L3.8 10.8" stroke="#A9ADB5" stroke-width="1.3" fill="none"/></svg>
<div class="t" style="left:139px;top:1053px;color:#A9ADB5;font-size:16.7px;letter-spacing:0.15px;font-weight:normal;">resources</div>
<svg class="a" style="left:224px;top:1055px;" width="12" height="12" viewBox="0 0 12 12" fill="none"><path d="M3.8 1.2L8.6 6L3.8 10.8" stroke="#A9ADB5" stroke-width="1.3" fill="none"/></svg>
<svg class="a" style="left:244px;top:1052px;" width="22" height="20" viewBox="0 0 22 20" fill="none"><path d="M7.6 4.9L1.3 9.3L7.6 13.6" stroke="#DB8552" stroke-width="1.4" fill="none"/><path d="M13.3 1.2L8.6 16.5" stroke="#DB8552" stroke-width="1.4"/><path d="M14.6 4.9L19.6 8.4" stroke="#DB8552" stroke-width="1.4"/><path d="M11.2 17.3C10.6 13.6 13.8 10.9 20.6 10.3C21.2 15.6 18.6 19 15.2 18.9C13.6 18.9 12.2 18.3 11.2 17.3Z" fill="#5A9E5F"/><path d="M13.2 17.6C15.3 16.8 17.2 15.4 18.6 13.8" stroke="#3D6E42" stroke-width="0.7"/></svg>
<div class="t" style="left:270px;top:1053px;color:#A9ADB5;font-size:16.7px;letter-spacing:0.4px;font-weight:normal;">applicationContext.xml</div>
<div class="t" style="left:1387px;top:1053px;color:#A9ADB5;font-size:16.7px;letter-spacing:-0.1px;font-weight:normal;">6:9</div>
<div class="t" style="left:1431px;top:1053px;color:#A9ADB5;font-size:16.7px;letter-spacing:-1.0px;font-weight:normal;">CRLF</div>
<div class="t" style="left:1492px;top:1053px;color:#7A7E85;font-size:16.7px;letter-spacing:0.15px;font-weight:normal;">UTF-8</div>
<svg class="a" style="left:1561px;top:1053px;" width="20" height="20" viewBox="0 0 20 20" fill="none"><path d="M2 10C4 6.5 6.8 4.8 10 4.8C13.2 4.8 16 6.5 18 10C16 13.5 13.2 15.2 10 15.2C6.8 15.2 4 13.5 2 10Z" stroke="#CED0D6" stroke-width="1.4"/><circle cx="10" cy="10" r="2.6" stroke="#CED0D6" stroke-width="1.4"/><path d="M2.5 18L17.5 2" stroke="#CED0D6" stroke-width="1.4"/></svg>
<div class="t" style="left:1602px;top:1053px;color:#A9ADB5;font-size:16.7px;letter-spacing:0.15px;font-weight:normal;">4 spaces</div>
<svg class="a" style="left:1692px;top:1053px;" width="22" height="20" viewBox="0 0 22 20" fill="none"><rect x="2.5" y="8.5" width="12" height="9" rx="1.5" stroke="#CED0D6" stroke-width="1.5"/><path d="M11.5 8.5V5.5C11.5 3.5 13 2 15 2C17 2 18.5 3.5 18.5 5.5V7" stroke="#CED0D6" stroke-width="1.5"/><rect x="7.6" y="11.5" width="1.8" height="3" fill="#CED0D6"/></svg>
</div></div></body></html>
